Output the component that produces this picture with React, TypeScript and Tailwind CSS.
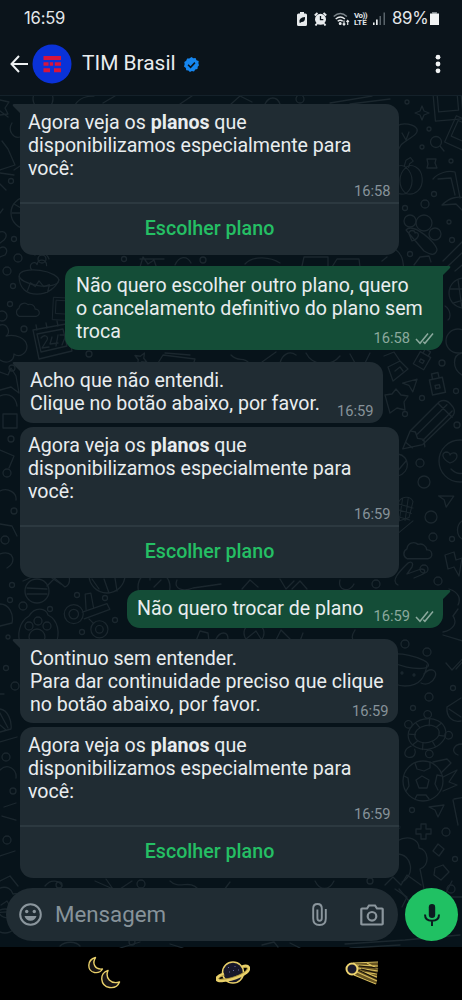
import React from "react";

type P = { x: number; y: number; s?: number; r?: number };

const at = ({ x, y, s = 1, r = 0 }: P) => `translate(${x} ${y}) rotate(${r}) scale(${s})`;

const Pumpkin = (p: P) => (
  <g transform={at(p)}>
    <path d="M0 -14c-6 -5 -17 0 -18 12s8 20 18 17c10 3 19 -5 18 -17s-12 -17 -18 -12zM0 -14c-9 8 -9 22 0 29M0 -14c9 8 9 22 0 29M-2 -15l2 -7 5 -3 3 4 -4 3 -1 4" />
  </g>
);
const Pencil = (p: P) => (
  <g transform={at(p)}>
    <path d="M-24 16l7 -17 28 -28 q6 -3 11 3 q5 5 2 10l-29 28zM-17 -1l5 1 2 6 6 1 1 7M-10 2l28 -28M-5 8l28 -28M-21 10l6 5M10 -27l13 13" />
  </g>
);
const Star = (p: P) => (
  <g transform={at(p)}><path d="M0 -7l2 5 5 2 -5 2 -2 5 -2 -5 -5 -2 5 -2z" /></g>
);
const Cloud = (p: P) => (
  <g transform={at(p)}><path d="M-10 7a5 5 0 0 1 0 -9a6 6 0 0 1 10 -4a6 6 0 0 1 8 5a4 4 0 0 1 1 8z" /></g>
);
const Bolt = (p: P) => (
  <g transform={at(p)}><path d="M-8 -10l9 -3 2 8 6 -2 -3 18 -5 -9 -6 2z" /></g>
);
const Tri = (p: P) => (
  <g transform={at(p)}><path d="M-8 -4l15 -2 -6 12 -3 -7z" /></g>
);
const Face = (p: P) => (
  <g transform={at(p)}>
    <circle r="21" />
    <path d="M-10 2c-8 -4 -9 -10 -4 -11 3 0 4 2 4 3 1 -3 7 -3 7 1 0 4 -4 6 -7 7zM8 2c-4 -4 -5 -9 -1 -10 3 0 4 2 4 3M-9 8q9 9 18 0" />
  </g>
);
const Ball = (p: P) => (
  <g transform={at(p)}>
    <circle r="20" />
    <path d="M-7 -1l6 -4 7 4 -2 8h-8zM-8 -18l2 6 7 2 6 -3 0 -6M-19 -5l4 2 1 8 -3 5M19 -5l-5 -1 -2 9 3 6M-8 18l2 -4 9 0 3 4M18 -8l10 -10 -4 -4 -14 3M20 -4l14 -7 -8 12 8 3 -14 6" />
  </g>
);
const Turtle = (p: P) => (
  <g transform={at(p)}>
    <ellipse rx="20" ry="16" /><ellipse rx="13" ry="9" />
    <path d="M-19 -4l7 2M-9 -14l3 6M6 -15l-2 7M17 -8l-6 3M18 6l-6 -2M6 15l-2 -6M-8 15l2 -7M-17 8l6 -3M-19 9c-8 1 -11 9 -5 11s9 -3 8 -7" />
    <circle cx="5" cy="-20" r="4" /><circle cx="22" cy="6" r="4" /><circle cx="-17" cy="-14" r="4" /><circle cx="-2" cy="21" r="4" />
  </g>
);
const Cup = (p: P) => (
  <g transform={at(p)}>
    <ellipse cx="0" cy="-9" rx="21" ry="6" transform="rotate(12)" />
    <path d="M-21 -13c-2 16 4 29 20 29s20 -10 22 -21M18 4c7 -8 14 -3 11 3 -2 5 -8 9 -14 6" />
    <circle cx="-4" cy="3" r="1" /><circle cx="8" cy="5" r="1" />
  </g>
);
const Leafy = (p: P) => (
  <g transform={at(p)}>
    <path d="M-18 12c-8 -4 -6 -15 3 -14 -1 -13 16 -16 19 -5 11 -3 17 11 8 17zM-10 12c3 6 16 7 20 0M-8 4l6 -4 3 5 6 -5" />
  </g>
);
const Bowl = (p: P) => (
  <g transform={at(p)}>
    <ellipse rx="21" ry="8" transform="rotate(8)" />
    <path d="M-21 -2c0 13 8 19 19 19s20 -7 23 -15M-12 13l3 -8 5 4 4 -6 5 6 6 -2 -2 8M-8 -9c-4 -6 4 -10 6 -5 1 -7 10 -6 10 1" />
  </g>
);
const Book = (p: P) => (
  <g transform={at(p)}>
    <path d="M-18 -12l33 -6 6 27 -33 8zM-14 -8l26 -5 4 17 -26 6zM-14 -12l-1 -5M-4 -14l-1 -5M7 -16l-1 -5" />
  </g>
);
const Photo = (p: P) => (
  <g transform={at(p)}><path d="M-14 -16h28v32h-28zM-10 -12h20v19h-20z" /></g>
);
const Bulb = (p: P) => (
  <g transform={at(p)}><path d="M-6 -5h12v14h-12zM-3 -5v-5h6v5M-2 1h4v3h-4z" /></g>
);
const Pacifier = (p: P) => (
  <g transform={at(p)}>
    <circle cx="-15" cy="-2" r="10" /><circle cx="-15" cy="-2" r="5" />
    <circle cx="12" cy="14" r="9" /><circle cx="12" cy="14" r="4" />
    <path d="M-6 -4l26 -9 3 6 -27 10M-2 -7l-1 -16 6 -1 3 16M1 3l5 5" />
  </g>
);
const Paw = (p: P) => (
  <g transform={at(p)}>
    <path d="M-17 18c-5 -12 -1 -25 8 -30 6 -10 17 -8 19 -1 10 5 13 18 7 31" />
    <circle cx="-9" cy="-2" r="4" /><circle cx="0" cy="-7" r="4" /><circle cx="9" cy="-2" r="4" /><circle cx="-1" cy="9" r="8" />
  </g>
);
const Plus = (p: P) => (
  <g transform={at(p)}><path d="M-2 -7h5v5h5v5h-5v5h-5v-5h-5v-5h5z" /></g>
);
const Basket = (p: P) => (
  <g transform={at(p)}>
    <path d="M-13 13l5 -25c3 -8 15 -9 18 -1l-5 20zM-10 -3l18 5M-8 -10l18 5M-12 5l18 5M-3 -17l-4 27M4 -17l-4 28M-13 13c-4 11 0 16 5 13l18 -15" />
  </g>
);
const Flower = (p: P) => (
  <g transform={at(p)}>
    <circle cx="-8" cy="-8" r="6" /><circle cx="6" cy="-6" r="8" /><circle cx="17" cy="5" r="6" />
    <path d="M-12 1c7 -8 31 13 31 20 -2 7 -8 4 -13 1zM-9 5c0 -5 6 -4 6 -1 4 -2 6 5 -3 8z" />
  </g>
);

const dots: [number, number, number][] = [
  [407, 101, 2], [429, 128, 2], [422, 146, 2], [451, 160, 2], [434, 193, 2.5], [425, 203, 4], [405, 207, 2.5],
  [449, 221, 2], [452, 239, 2.5], [410, 253, 2.5], [442, 362, 3], [456, 390, 2.5], [422, 397, 2.5], [405, 413, 2.5],
  [457, 424, 3], [420, 462, 4], [424, 481, 6], [431, 516, 6], [433, 536, 4], [452, 538, 2.5],
  [424, 568, 4], [438, 580, 4], [376, 583, 4], [405, 643, 4], [427, 651, 4], [453, 687, 2.5],
  [429, 696, 4], [413, 707, 2.5], [412, 809, 2.5], [446, 831, 4], [455, 858, 2.5],
  [451, 888, 4], [11, 180, 2.5], [18, 257, 4], [14, 238, 2.5], [42, 258, 4], [7, 270, 4], [13, 285, 2.5],
  [10, 303, 2.5], [2, 315, 5], [24, 328, 3], [11, 438, 3], [7, 472, 4], [14, 510, 3], [5, 539, 4], [12, 584, 2.5],
  [10, 599, 2.5], [23, 605, 4], [77, 594, 2.5], [50, 608, 2.5], [105, 597, 2.5], [115, 619, 2.5], [82, 631, 2.5],
  [8, 636, 2], [6, 667, 2.5], [15, 685, 4], [6, 756, 4], [13, 790, 3], [7, 839, 4], [59, 884, 3], [141, 883, 4],
  [124, 258, 2.5], [203, 259, 3], [89, 353, 3], [132, 941, 3], [300, 98, 4], [370, 880, 3], [12, 367, 3],
];

const Wallpaper = () => (
  <svg
    className="absolute left-0 top-0 h-[852px] w-[462px]"
    viewBox="0 95 462 852"
    fill="none"
    stroke="#1b272e"
    strokeWidth="1.3"
    strokeLinejoin="round"
    strokeLinecap="round"
  >
    {dots.map(([x, y, r], i) => (
      <circle key={i} cx={x} cy={y} r={r} />
    ))}
    {/* right margin */}
    <Star x={422} y={112} /><Photo x={448} y={103} r={-5} /><Photo x={462} y={133} r={24} s={0.9} />
    <path d="M397 125c6 -4 17 -2 20 3 2 6 -10 10 -16 16l-4 7M402 132l4 7 3 -8" />
    <circle cx="436" cy="141" r="5.5" /><path d="M440 145l4 5M427 158h9l-1 4 2 5h-10l1 -4z" />
    <Pumpkin x={406} y={179} s={0.9} />
    <path d="M433 178c5 -6 15 -9 22 -7l5 26M438 178l13 -1 4 17M442 204c8 -8 17 -9 22 -7M442 204l14 -1 6 6" />
    <Flower x={418} y={228} />
    <path d="M395 248c8 6 8 12 9 22M414 264l6 -8 9 -1 2 6M443 260l22 -22M447 266l18 -17M455 270l12 -10" />
    <circle cx="464" cy="292" r="15" /><path d="M450 288h20M453 302l14 -4M458 279l4 28M445 305c6 4 6 12 3 14" />
    <circle cx="458" cy="340" r="12" /><path d="M462 352c-10 2 -10 16 0 22" />
    <path d="M388 366l12 -6 8 8 -15 12zM384 355l10 -4 6 9M395 370l5 -4 3 4" />
    <Bulb x={423} y={358} r={30} /><Bulb x={437} y={383} r={-12} s={1.1} /><Tri x={411} y={385} r={-8} />
    <path d="M385 394l7 -1 4 -5 5 6 7 1 -4 6 1 8 -8 -2 -7 5 -2 -7z" />
    <Pencil x={428} y={431} s={1.05} />
    <Face x={460} y={460} />
    <path d="M398 453c12 2 13 18 0 22M396 472l10 -12" />
    <Basket x={405} y={511} s={0.8} /><Tri x={446} y={500} r={8} /><Cloud x={418} y={550} s={1.1} /><Bolt x={453} y={564} />
    <path d="M462 520c-6 4 -6 14 0 18M398 584c-8 -4 2 -14 8 -20 4 -5 8 -3 6 2l-5 7 14 -5c5 0 5 4 0 6l-7 3" />
    <path d="M449 588c10 3 12 10 9 16M443 631c10 -2 15 -9 10 -16l5 -7M443 634l20 6M446 662l6 7 17 -18M456 668l10 -11" />
    <Cup x={406} y={669} />
    <path d="M447 706l14 -9M447 706c-1 10 6 16 14 14M449 708l12 8" />
    <Turtle x={427} y={733} s={0.95} r={-12} /><path d="M462 743c-8 0 -12 8 -4 11" />
    <Ball x={423} y={780} /><Tri x={437} y={810} /><Plus x={423} y={830} /><Plus x={396} y={826} s={0.5} />
    <path d="M454 798l12 -2M453 799l5 25M438 843l6 5 -5 7 -6 -5zM435 867l8 -3 6 7 -8 8 -7 -5z" />
    <path d="M397 840c12 -7 22 -1 22 7 10 2 11 17 1 21l4 20M397 853c16 0 18 22 5 28M385 884l8 -8 8 8 6 -10 14 10M399 888l10 12M452 880l-8 16 18 0" />
    {/* left margin */}
    <path d="M0 99l9 2 -4 6 3 6 -8 1M0 110l8 6M2 140l6 8 7 16 -15 5M0 172l14 2M20 165l-6 4M12 122c-5 8 2 16 8 14M0 183l6 6M0 212l3 -4" />
    <circle cx="27" cy="212" r="16" /><path d="M12 212h10M14 203l7 4" />
    <path d="M0 231c6 -2 8 4 4 8l-4 3M0 247c5 -3 9 2 5 7l-5 2M35 254c5 -4 12 -2 14 4" />
    <Bowl x={39} y={277} s={0.95} /><Cloud x={28} y={309} s={0.9} /><Photo x={63} y={308} s={0.7} r={3} /><Book x={51} y={341} />
    <path d="M41 337c3 -4 8 -2 6 2l-5 8 7 -1M52 336l-2 7 8 -1M58 334l-2 11M60 334h6l-4 10" />
    <path d="M0 324c8 -2 11 8 6 11 10 -2 20 2 21 10 0 8 -8 12 -13 8 0 8 -8 10 -14 6M0 371l8 3 3 -7 5 8 3 17 -8 -6 -11 3" />
    <path d="M0 395c10 -4 16 2 17 10M3 413h14v14h-14zM0 449l14 6 -5 12M0 490c8 -4 17 2 16 9M0 523l12 2 5 10M0 553c14 -5 17 9 7 14" />
    <path d="M22 567l8 -4 6 8M23 580l23 -10 19 16c7 -3 5 -13 0 -16" /><circle cx="37" cy="590" r="12" /><path d="M27 587l20 1M27 593l20 0M46 573l15 10M61 571l-14 14" />
    <path d="M0 603c9 0 14 10 12 19l-12 3M0 693h4M0 708c8 1 12 12 11 20l-11 3M0 712l8 15M0 724l6 5" />
    <Pacifier x={88} y={615} s={0.95} /><Paw x={38} y={627} />
    <path d="M0 741l17 -5M0 769c8 -8 17 0 16 8M4 806l12 -4M2 815l14 4M0 855l15 -5" />
    <Leafy x={9} y={900} /><circle cx="5" cy="920" r="12" /><path d="M0 880l10 -5 8 10" />
    {/* gaps between bubbles */}
    <circle cx="43" cy="98" r="10" /><path d="M75 104c5 -8 12 -9 19 -9M103 102l12 -7M180 103l12 -8M231 103l9 -8 12 6M265 103c4 -8 12 -8 15 0M330 102l42 -7M350 103l40 -5" />
    <path d="M140 266l3 -10 5 7 6 -4 2 6M140 258h24M175 264c4 -9 12 -10 16 -2M245 263c8 -9 26 -7 35 -1M302 265l2 -9h24v9M332 266l5 -8h22l1 8M382 260l5 -4" />
    <Star x={141} y={358} r={30} /><path d="M158 362l5 -8 32 4 -2 6M190 354l-25 -2M231 354c8 8 12 1 18 8M262 361l14 -10M280 362c2 -8 9 -13 16 -8M306 352c6 12 24 15 34 3M350 353l5 9M370 352l-5 10" />
    <circle cx="107" cy="574" r="18" /><path d="M92 578l7 10M104 578l5 14M115 577l2 13" /><circle cx="154" cy="586" r="16" /><path d="M154 586l7 -7M150 575v4M160 594l2 2" />
    <path d="M177 579c-4 9 6 12 16 8l28 -4M242 588l8 -9 8 7M280 578l6 10 8 -8M292 588l8 -8 7 8M340 579c-3 11 10 13 14 4" />
    <path d="M196 640l4 -10 8 2 1 8M216 638c4 -8 12 -8 12 0M246 638l10 -8 5 8M276 639l5 -10 9 9M300 640l3 -8M355 629c-8 12 3 14 12 10l20 1" /><circle cx="254" cy="632" r="10" />
    <path d="M45 885c6 -8 15 -5 17 0M95 880l18 8 -7 -10M120 888l12 -8M170 880c9 9 20 -2 28 8M230 881l-6 8M315 880c5 10 14 10 19 0M395 888l12 8 -5 10M60 945c5 -5 16 -5 20 0M120 947l20 -6M170 943l13 4M262 944l12 -3 4 5M290 942l10 5M345 943l60 -4 55 -5M350 947l50 -3" />
  </svg>
);

const TailIn = () => (
  <svg className="absolute -left-[8px] top-0 h-[14px] w-[14px]" viewBox="0 0 14 14">
    <path d="M2 0H14V14H8V9L1 2Q0 0 2 0Z" fill="#202c33" />
  </svg>
);
const TailOut = () => (
  <svg className="absolute -right-[8px] top-0 h-[14px] w-[14px]" viewBox="0 0 14 14">
    <path d="M12 0H0V14H6V9L13 2Q14 0 12 0Z" fill="#144d37" />
  </svg>
);
const Checks = () => (
  <svg className="ml-[5px] h-[13px] w-[19px]" viewBox="0 0 19 13" fill="none" stroke="#8ba99d" strokeWidth="1.5">
    <path d="M1 7l4 4.3L13 1.5M8.3 9.7l1.6 1.6L18 1.5" />
  </svg>
);

const Time = ({ t, sent }: { t: string; sent?: boolean }) => (
  <span
    className={
      sent
        ? "absolute bottom-[3px] right-[9px] flex items-center text-[14.7px] leading-[18px] text-[#8ba99d]"
        : "absolute flex items-center text-[14.7px] leading-[18px] text-[#87939a]"
    }
  >
    {t}
    {sent && <Checks />}
  </span>
);

const PlanCard = ({ t, tail }: { t: string; tail?: boolean }) => (
  <div
    className={
      tail
        ? "relative ml-[20px] flex h-[151px] w-[379px] flex-col rounded-[13px] rounded-tl-none bg-[#202c33]"
        : "relative ml-[20px] flex h-[151px] w-[379px] flex-col rounded-[13px] bg-[#202c33]"
    }
  >
    {tail && <TailIn />}
    <div className="relative h-[98px] whitespace-nowrap pl-[8px] pt-[7px] text-[19.58px] leading-[23px] text-[#e9edef]">
      <p>Agora veja os <b className="font-bold">planos</b> que</p>
      <p>disponibilizamos especialmente para</p>
      <p>você:</p>
      <div className="absolute bottom-[20px] right-[45px]"><Time t={t} /></div>
    </div>
    <div className="flex h-[53px] items-center justify-center border-t-2 border-[#2c3940] pb-[2px] text-[19.65px] font-medium text-[#25bf64]">
      Escolher plano
    </div>
  </div>
);

export default function App() {
  return (
    <div className="flex h-[1000px] w-[462px] flex-col overflow-hidden bg-[#07131a] font-['Roboto',sans-serif]">
      <header className="h-[95px] shrink-0 bg-[#0b141b] text-[#e3e7ea]">
        <div className="flex h-[37px] items-center pl-[24px] pr-[23px]">
          <span className="font-['Inter',sans-serif] text-[16.6px] tracking-[-0.2px]">16:59</span>
          <div className="ml-auto flex items-center">
            <svg className="h-[14px] w-[10px]" viewBox="0 0 10 14">
              <path d="M3 0h4v1.5h1.5Q10 1.5 10 3v9.5q0 1.5-1.5 1.5h-7Q0 14 0 12.5V3q0-1.5 1.5-1.5H3z" fill="#e7eaec" />
              <path d="M2.500 10.500q-1-5 5.500-5.500q.5 5-3.500 5l-1.500 1z" fill="#0b141b" />
            </svg>
            <svg className="ml-[7px] h-[14px] w-[13px]" viewBox="0 0 13 14">
              <circle cx="6.5" cy="7.3" r="5.5" fill="#e7eaec" />
              <path d="M.8 3.500L3.500 1M12.200 3.500L9.500 1M3 11.500l-1.500 2M10 11.500l1.500 2" stroke="#e7eaec" strokeWidth="1.9" />
              <path d="M6.500 4v3.600h2.800" stroke="#0b141b" strokeWidth="1.3" fill="none" />
            </svg>
            <svg className="ml-[6px] h-[14px] w-[17px]" viewBox="0 0 17 14" fill="none" stroke="#e7eaec" strokeWidth="1.4">
              <path d="M.7 4.500q6.600-6 13.200 0" stroke="#7c858b" /><path d="M2.700 7q4.600-4 9.200 0M4.700 9.300q2.600-2.200 5 0" />
              <circle cx="7.200" cy="11.500" r=".8" fill="#e7eaec" />
              <path d="M11 8.500v4.500M9.700 11.700l1.300 1.500 1.300-1.500M14.700 13V8.500M13.400 9.800l1.300-1.500L16 9.800" strokeWidth="1.1" />
            </svg>
            <div className="ml-[4px] flex w-[14px] flex-col whitespace-nowrap text-[8px] font-bold leading-[7px] tracking-[-0.5px]">
              <span>Vo))</span>
              <span className="tracking-[-0.1px]">LTE</span>
            </div>
            <svg className="ml-[5px] h-[13px] w-[13px]" viewBox="0 0 13 13">
              <path d="M0 10.500h1.600V13H0zM3 7.500h1.700V13H3z" fill="#e7eaec" />
              <path d="M6.500 4h1.500v9H6.500zM10.500 0.500H12V13h-1.500z" fill="#59636a" />
            </svg>
            <span className="ml-[6px] w-[38px] whitespace-nowrap font-['Inter',sans-serif] text-[16.800px] tracking-[-0.3px]">89%</span>
            <svg className="h-[13px] w-[9px]" viewBox="0 0 9 13">
              <path d="M2.500 0h4v1.500H9V13H0V1.500h2.500z" fill="#f1f3f4" />
              <path d="M2.500 0h4v1.500h-4z" fill="#7c858b" />
            </svg>
          </div>
        </div>
        <div className="flex h-[54px] items-center pl-[10px] pr-[21px]">
          <svg className="h-[20px] w-[19px]" viewBox="0 0 19 20" fill="none" stroke="#eef1f3" strokeWidth="2">
            <path d="M18 10H2M9 2L1.500 10L9 18" />
          </svg>
          <svg className="ml-[3px] h-[40px] w-[40px]" viewBox="0 0 40 40">
            <circle cx="20" cy="20" r="19.5" fill="#0a32d8" />
            <path d="M11.500 12h17.500v4H11.500zM11.500 18.300h5v3.500h-5zM17.800 18.300h3.300v3.500h-3.300zM22.800 18.300h6.200v3.500h-6.200zM11.500 24.200h6.500v4h-6.500zM22 24.200h7v4h-7z" fill="#d7143c" />
          </svg>
          <span className="ml-[10px] whitespace-nowrap text-[20.9px] text-[#e9edef]">TIM Brasil</span>
          <svg className="ml-[8px] h-[15px] w-[15px]" viewBox="0 0 24 24">
            <path d="M12 0l3 2 3.500-.5 1.500 3.500 3.500 1.500L23 10l1 3-2 2.500-.5 3.500-3.500 1-2 3-3.500-.5L9.500 24 7 21.500 3.500 21 3 17.500 0 15l1-3.500L.5 8 3.500 6 5 2.500 8.500 2.500z" fill="#1686ef" />
            <path d="M6.500 12.500l4 4 7-7.500" fill="none" stroke="#0b141b" strokeWidth="2.5" />
          </svg>
          <svg className="ml-auto h-[20px] w-[6px]" viewBox="0 0 6 20" fill="#f1f3f4">
            <circle cx="3" cy="3.200" r="2.400" /><circle cx="3" cy="10" r="2.400" /><circle cx="3" cy="16.800" r="2.400" />
          </svg>
        </div>
      </header>

      <main className="relative h-[852px] shrink-0 border-t border-[#14212a]">
        <Wallpaper />
        <div className="relative flex flex-col pt-[8px]">
          <PlanCard t="16:58" tail />

          <div className="relative ml-[65px] mt-[11px] h-[84px] w-[378px] whitespace-nowrap rounded-[13px] rounded-tr-none bg-[#144d37] pl-[11px] pt-[8px] text-[19.58px] leading-[23px] text-[#e9edef]">
            <TailOut />
            <p>Não quero escolher outro plano, quero</p>
            <p>o cancelamento definitivo do plano sem</p>
            <p>troca</p>
            <Time t="16:58" sent />
          </div>

          <div className="relative ml-[20px] mt-[12px] h-[61px] w-[363px] whitespace-nowrap rounded-[13px] rounded-tl-none bg-[#202c33] pl-[10px] pt-[7px] text-[19.58px] leading-[23px] text-[#e9edef]">
            <TailIn />
            <p>Acho que não entendi.</p>
            <p>Clique no botão abaixo, por favor.</p>
            <div className="absolute bottom-[21px] right-[46px]"><Time t="16:59" /></div>
          </div>

          <div className="mt-[4px]"><PlanCard t="16:59" /></div>

          <div className="relative ml-[127px] mt-[12px] h-[38px] w-[316px] whitespace-nowrap rounded-[13px] rounded-tr-none bg-[#144d37] pl-[10px] pt-[7px] text-[19.58px] leading-[23px] text-[#e9edef]">
            <TailOut />
            <p>Não quero trocar de plano</p>
            <Time t="16:59" sent />
          </div>

          <div className="relative ml-[20px] mt-[11px] h-[84px] w-[378px] whitespace-nowrap rounded-[13px] rounded-tl-none bg-[#202c33] pl-[10px] pt-[8px] text-[19.58px] leading-[23px] text-[#e9edef]">
            <TailIn />
            <p>Continuo sem entender.</p>
            <p>Para dar continuidade preciso que clique</p>
            <p>no botão abaixo, por favor.</p>
            <div className="absolute bottom-[21px] right-[46px]"><Time t="16:59" /></div>
          </div>

          <div className="mt-[4px]"><PlanCard t="16:59" /></div>

          <div className="mt-[10px] flex h-[53px] pl-[6px]">
            <div className="flex w-[392px] items-center rounded-full bg-[#202c33] pl-[13px] pr-[14px]">
              <svg className="h-[23px] w-[23px]" viewBox="0 0 23 23">
                <circle cx="11.500" cy="11.500" r="10.300" fill="none" stroke="#8b969d" strokeWidth="2" />
                <circle cx="7.700" cy="8.500" r="1.700" fill="#8b969d" /><circle cx="15.300" cy="8.500" r="1.700" fill="#8b969d" />
                <path d="M5.500 13h12q-1.500 4.800-6 4.800t-6-4.800z" fill="#8b969d" />
              </svg>
              <span className="ml-[13px] pt-px text-[22.3px] text-[#87939a]">Mensagem</span>
              <svg className="ml-auto h-[23px] w-[15px]" viewBox="0 0 15 23" fill="none" stroke="#8b969d" strokeWidth="1.9">
                <path d="M13.800 6V15.500q0 6.500-6.300 6.500t-6.300-6.500V5.500Q1.200 1 5.500 1T9.800 5.500V15q0 2.800-2.200 2.800T5.400 15V6.500" />
              </svg>
              <svg className="ml-[33px] h-[22px] w-[24px]" viewBox="0 0 24 22" fill="none" stroke="#8b969d" strokeWidth="2.2">
                <path d="M2 4.500h5L9 1.500h6l2 3h5q.7 0 .7.700v14.600q0 .7-.7.700H2q-.7 0-.7-.7V5.200q0-.7.700-.7z" />
                <circle cx="12" cy="12.300" r="4.300" />
              </svg>
            </div>
            <div className="ml-[7px] flex h-[53px] w-[53px] items-center justify-center rounded-full bg-[#20c163]">
              <svg className="h-[22px] w-[16px]" viewBox="0 0 16 22">
                <rect x="4.800" y="0" width="6.400" height="14" rx="3.200" fill="#0b1c20" />
                <path d="M1 10.500q0 6.300 7 6.300t7-6.300M8 16.500V22" fill="none" stroke="#0b1c20" strokeWidth="2" />
              </svg>
            </div>
          </div>
        </div>
      </main>

      <nav className="flex h-[53px] shrink-0 bg-black pl-[87px] pt-[9px]">
        <svg className="h-[33px] w-[34px]" viewBox="0 0 34 33" fill="#161315" stroke="#e8cf69" strokeWidth="1.4" strokeLinejoin="round">
          <path d="M8.500 1.500C-.5 4 0 15 7.500 16.500c4 .7 6.500-1 8-3.500C7.500 14 5 7 8.500 1.500z" />
          <path d="M21 14.500C12 17 13 30 22.500 31.500c5 .7 8.500-1.500 10-5.500C23.500 28.500 18 22 21 14.500z" />
        </svg>
        <svg className="ml-[95px] mt-[4px] h-[26px] w-[34px]" viewBox="0 0 34 26" fill="none">
          <circle cx="17" cy="12.500" r="10.500" fill="#17172a" stroke="#e8cf69" strokeWidth="1.5" />
          <path d="M12 7l1 1M19 6v1M22 10h1M13 12h1M17 10l1 1" stroke="#68689b" />
          <path d="M8 14C-1 17-1 21 6 20.500C18 20 34 13 32.500 7.500Q31 5 26 7" stroke="#e8cf69" strokeWidth="3.3" />
          <path d="M8 15C1 18 2 20 6 19.300C18 18.500 32 12 31.500 8Q30 6.500 27 8" stroke="#99832e" strokeWidth=".8" />
        </svg>
        <svg className="ml-[95px] mt-[5px] h-[25px] w-[35px]" viewBox="0 0 35 25" fill="none">
          <path d="M8 2.500L33 1.500L31.500 23Q20 17 8 14z" fill="#685421" />
          <path d="M8 2l25-1M12 4l21 1M13 7l20 3M13 9l19 7M12 11l20 9M9 14l22 9M22 2l11 6M17 11l15 2" stroke="#d9bf5e" strokeWidth="1.1" />
          <path d="M14 5l19 2M13 9l19 9M16 8l16 4" stroke="#151009" strokeWidth="1.2" />
          <circle cx="7" cy="8" r="5.500" fill="#18182b" stroke="#eed470" strokeWidth="2" />
        </svg>
      </nav>
    </div>
  );
}
